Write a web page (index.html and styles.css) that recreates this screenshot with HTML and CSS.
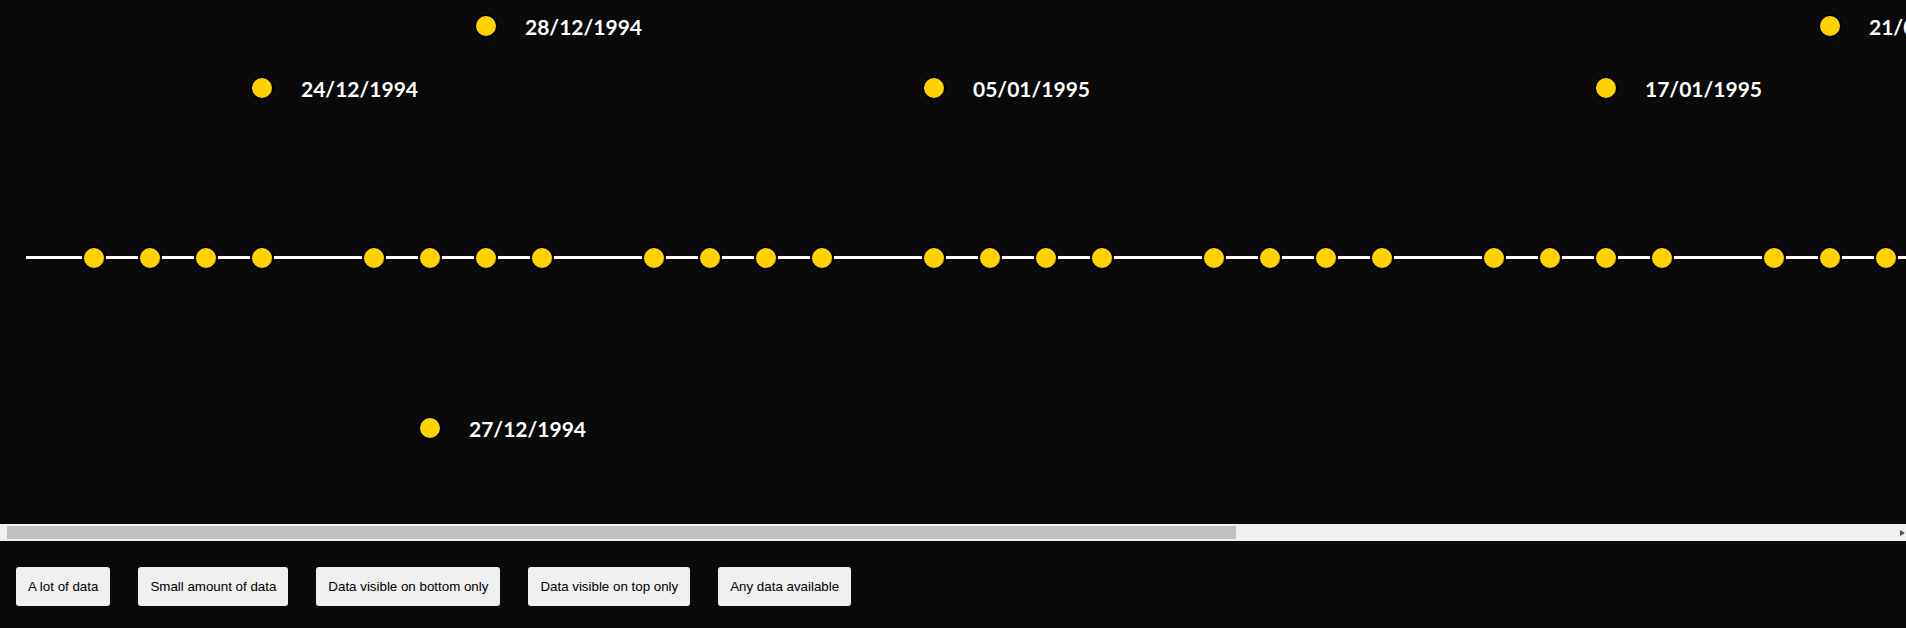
FILE: index.html
```html
<!DOCTYPE html>
<html lang="en">
<head>
<meta charset="utf-8">
<title>Timeline</title>
<link rel="stylesheet" href="styles.css">
</head>
<body>
<div class="timeline">
  <div class="track">
    <div class="axis"></div>
    <span class="axis-dot" style="grid-column:1"></span>
    <span class="axis-dot" style="grid-column:2"></span>
    <span class="axis-dot" style="grid-column:3"></span>
    <span class="axis-dot" style="grid-column:4"></span>
    <span class="axis-dot" style="grid-column:6"></span>
    <span class="axis-dot" style="grid-column:7"></span>
    <span class="axis-dot" style="grid-column:8"></span>
    <span class="axis-dot" style="grid-column:9"></span>
    <span class="axis-dot" style="grid-column:11"></span>
    <span class="axis-dot" style="grid-column:12"></span>
    <span class="axis-dot" style="grid-column:13"></span>
    <span class="axis-dot" style="grid-column:14"></span>
    <span class="axis-dot" style="grid-column:16"></span>
    <span class="axis-dot" style="grid-column:17"></span>
    <span class="axis-dot" style="grid-column:18"></span>
    <span class="axis-dot" style="grid-column:19"></span>
    <span class="axis-dot" style="grid-column:21"></span>
    <span class="axis-dot" style="grid-column:22"></span>
    <span class="axis-dot" style="grid-column:23"></span>
    <span class="axis-dot" style="grid-column:24"></span>
    <span class="axis-dot" style="grid-column:26"></span>
    <span class="axis-dot" style="grid-column:27"></span>
    <span class="axis-dot" style="grid-column:28"></span>
    <span class="axis-dot" style="grid-column:29"></span>
    <span class="axis-dot" style="grid-column:31"></span>
    <span class="axis-dot" style="grid-column:32"></span>
    <span class="axis-dot" style="grid-column:33"></span>
    <span class="axis-dot" style="grid-column:34"></span>
    <span class="axis-dot" style="grid-column:36"></span>
    <span class="axis-dot" style="grid-column:37"></span>
    <span class="axis-dot" style="grid-column:38"></span>
    <span class="axis-dot" style="grid-column:39"></span>
    <span class="axis-dot" style="grid-column:41"></span>
    <span class="axis-dot" style="grid-column:42"></span>
    <span class="axis-dot" style="grid-column:43"></span>
    <span class="axis-dot" style="grid-column:44"></span>
    <span class="axis-dot" style="grid-column:46"></span>
    <span class="axis-dot" style="grid-column:47"></span>
    <span class="axis-dot" style="grid-column:48"></span>
    <span class="axis-dot" style="grid-column:49"></span>
    <span class="axis-dot" style="grid-column:51"></span>

    <div class="event level-2" style="grid-column:4"><span class="dot"></span><span class="date">24/12/1994</span></div>
    <div class="event below" style="grid-column:7"><span class="dot"></span><span class="date">27/12/1994</span></div>
    <div class="event level-1" style="grid-column:8"><span class="dot"></span><span class="date">28/12/1994</span></div>
    <div class="event level-2" style="grid-column:16"><span class="dot"></span><span class="date">05/01/1995</span></div>
    <div class="event level-2" style="grid-column:28"><span class="dot"></span><span class="date">17/01/1995</span></div>
    <div class="event level-1" style="grid-column:32"><span class="dot"></span><span class="date">21/01/1995</span></div>
  </div>
</div>
<div class="scrollbar">
  <div class="scrollbar-thumb"></div>
  <span class="scrollbar-arrow"></span>
</div>
<div class="controls">
  <button class="btn" type="button">A lot of data</button>
  <button class="btn" type="button">Small amount of data</button>
  <button class="btn" type="button">Data visible on bottom only</button>
  <button class="btn" type="button">Data visible on top only</button>
  <button class="btn" type="button">Any data available</button>
</div>
</body>
</html>
```
FILE: styles.css
```css
html, body {
  margin: 0;
  padding: 0;
  background: #0a0a0a;
}

body {
  height: 628px;
  overflow: hidden;
  font-family: "Liberation Sans", Arial, sans-serif;
}

.timeline {
  width: 1906px;
  height: 524px;
  overflow: hidden;
}

.scrollbar {
  display: flex;
  align-items: center;
  width: 1906px;
  height: 17px;
  background: #f0f0f0;
}

.scrollbar-thumb {
  width: 1229px;
  height: 13px;
  margin-left: 7px;
  background: #c1c1c1;
}

.scrollbar-arrow {
  width: 0;
  height: 0;
  margin-left: auto;
  margin-right: 1px;
  border-left: 5px solid #505050;
  border-top: 3.5px solid transparent;
  border-bottom: 3.5px solid transparent;
}

.track {
  display: grid;
  grid-template-columns: repeat(51, 56px);
  grid-template-rows: 52px 72px 122px 24px 146px 24px 84px;
  width: 2956px;
  height: 524px;
  box-sizing: border-box;
  padding-left: 66px;
  padding-right: 34px;
}

.axis {
  grid-row: 4;
  grid-column: 1 / -1;
  align-self: start;
  height: 3px;
  margin: 10px -34px 0 -40px;
  background: #ffffff;
}

.axis-dot,
.dot {
  display: block;
  width: 20px;
  height: 20px;
  border: 2px solid #000;
  border-radius: 50%;
  background: #ffd200;
}

.axis-dot {
  grid-row: 4;
  justify-self: center;
  align-self: center;
}

.event {
  display: flex;
  align-items: center;
  gap: 27px;
  justify-self: start;
  align-self: center;
  width: max-content;
  margin-left: 16px;
}

.level-1 { grid-row: 1; }
.level-2 { grid-row: 2; }
.below { grid-row: 6; }

.date {
  font-family: Lato, "Open Sans", sans-serif;
  font-weight: 700;
  font-size: 21px;
  line-height: 1;
  color: #ffffff;
  white-space: nowrap;
}

.controls {
  display: flex;
  gap: 28px;
  padding: 26px 16px 0;
}

.btn {
  height: 39px;
  padding: 0 12px;
  border: none;
  border-radius: 3px;
  background: #efefef;
  color: #000;
  font-family: "Liberation Sans", Arial, sans-serif;
  font-size: 13.333px;
}
```
